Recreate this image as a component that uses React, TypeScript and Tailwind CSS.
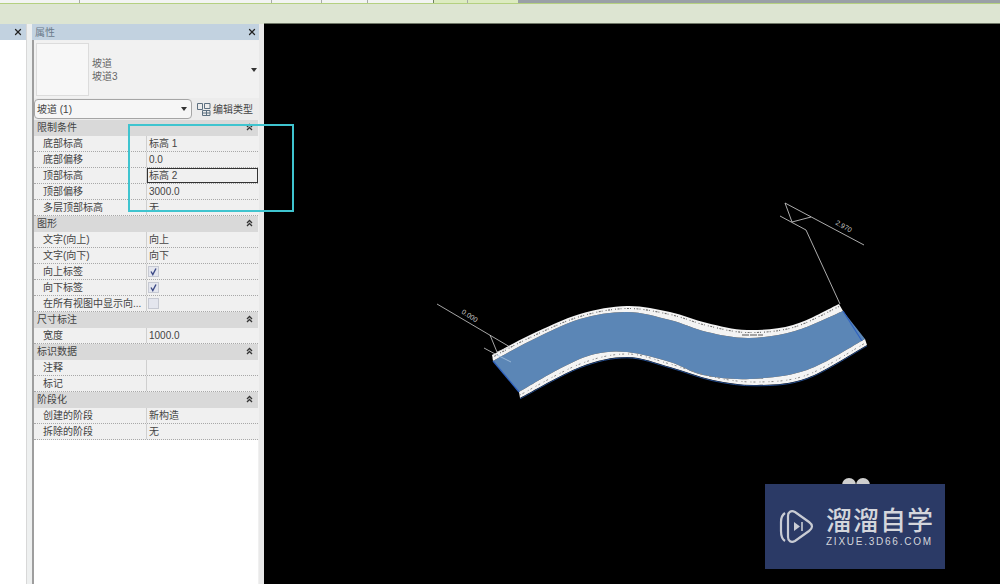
import React from "react";
import { X } from "lucide-react";

const cjk = { fontFamily: '"Liberation Sans", "Noto Sans CJK SC", sans-serif' };

type Row = { label: string; value?: string; check?: boolean | "off"; active?: boolean };
type Group = { title: string; rows: Row[] };

const groups: Group[] = [
  {
    title: "限制条件",
    rows: [
      { label: "底部标高", value: "标高 1" },
      { label: "底部偏移", value: "0.0" },
      { label: "顶部标高", value: "标高 2", active: true },
      { label: "顶部偏移", value: "3000.0" },
      { label: "多层顶部标高", value: "无" },
    ],
  },
  {
    title: "图形",
    rows: [
      { label: "文字(向上)", value: "向上" },
      { label: "文字(向下)", value: "向下" },
      { label: "向上标签", check: true },
      { label: "向下标签", check: true },
      { label: "在所有视图中显示向...", check: "off" },
    ],
  },
  { title: "尺寸标注", rows: [{ label: "宽度", value: "1000.0" }] },
  { title: "标识数据", rows: [{ label: "注释" }, { label: "标记" }] },
  {
    title: "阶段化",
    rows: [
      { label: "创建的阶段", value: "新构造" },
      { label: "拆除的阶段", value: "无" },
    ],
  },
];

// smooth line through the points, catmull-rom turned into beziers
function spline(pts: number[][]) {
  let d = `M${pts[0][0]} ${pts[0][1]}`;
  for (let i = 0; i < pts.length - 1; i++) {
    const p0 = pts[i - 1] || pts[i];
    const p1 = pts[i];
    const p2 = pts[i + 1];
    const p3 = pts[i + 2] || p2;
    const c1x = p1[0] + (p2[0] - p0[0]) / 6;
    const c1y = p1[1] + (p2[1] - p0[1]) / 6;
    const c2x = p2[0] - (p3[0] - p1[0]) / 6;
    const c2y = p2[1] - (p3[1] - p1[1]) / 6;
    d += ` C${c1x.toFixed(1)} ${c1y.toFixed(1)} ${c2x.toFixed(1)} ${c2y.toFixed(1)} ${p2[0]} ${p2[1]}`;
  }
  return d;
}

const topOuter = [[492, 355], [530, 335], [580, 314], [627, 306], [670, 312], [707, 323], [747, 330], [793, 325], [839, 304]];
const topInner = [[493, 361], [530, 341], [580, 319], [627, 312], [670, 320], [707, 332], [749, 338], [795, 331], [843, 311]];
const botInner = [[519, 392], [563, 367], [595, 354], [627, 352], [670, 362], [703, 375], [750, 379], [807, 370], [865, 339]];
const botOuter = [[520, 398], [580, 367], [627, 357], [670, 367], [713, 380], [757, 385], [807, 378], [867, 345]];

function band(a: number[][], b: number[][]) {
  const back = spline([...b].reverse()).replace("M", "L");
  return `${spline(a)} ${back} Z`;
}

function RampDrawing() {
  return (
    <svg viewBox="264 24 736 560" className="block h-full w-full" fill="none">
      <path d={band(topInner, botInner)} fill="#5b86b6" />
      <path d={band(topOuter, topInner)} fill="#f4f4f4" />
      <path d={band(botInner, botOuter)} fill="#f4f4f4" />
      <path d={spline(topOuter)} stroke="#6e6e6e" strokeWidth="1.1" strokeDasharray="1 1.5 2 1 1 3" transform="translate(0 2.5)" />
      <path d={spline(botOuter)} stroke="#8a8a8a" strokeWidth="1" strokeDasharray="1 2 2 4" transform="translate(0 -3)" />
      <path d={spline(botOuter)} stroke="#2f5fb0" strokeWidth="0.8" transform="translate(0 0.8)" />
      <path d="M742 335H763" stroke="#555" strokeWidth="1" strokeDasharray="7 1" />
      <path d="M493 361L519 392" stroke="#2f62c0" strokeWidth="1.2" />
      <path d="M843 311L862 341" stroke="#2f62c0" strokeWidth="1.2" />
      <path d="M437 304L510 347M484 348L497 355M490 335L497 352L510 347" stroke="#cfcfcf" strokeWidth="0.8" />
      <path d="M497 355L511 362" stroke="#a9c4e0" strokeWidth="0.8" />
      <path d="M785 203L864 245M780 216L806 230M785 203L792 222L811 217M806 230L840 304" stroke="#d8d8d8" strokeWidth="0.8" />
      <text x="0" y="0" fontSize="7" fill="#c8c8c8" transform="translate(461 313) rotate(33)" style={cjk}>0.000</text>
      <text x="0" y="0" fontSize="7" fill="#c8c8c8" transform="translate(835 224) rotate(30)" style={cjk}>2.970</text>
    </svg>
  );
}

function ChevronsUp() {
  return (
    <svg width="7" height="8" viewBox="0 0 7 8" fill="none" stroke="#333" strokeWidth="1.3">
      <path d="M1 4L3.5 1.5L6 4M1 7L3.5 4.5L6 7" />
    </svg>
  );
}

function Caret({ className }: { className?: string }) {
  return (
    <svg width="6" height="4" viewBox="0 0 6 4" className={className}>
      <path d="M0 0H6L3 4Z" fill="#333" />
    </svg>
  );
}

function CheckCell({ on }: { on: boolean }) {
  return (
    <div className="-ml-px flex h-[11px] w-[11px] items-center justify-center border border-[#c6c9d2] bg-[#e4e6ee]">
      {on && (
        <svg width="9" height="9" viewBox="0 0 9 9" fill="none" stroke="#3d4a86" strokeWidth="1.4">
          <path d="M2 4.5L3.8 7.5L7 1.5" />
        </svg>
      )}
    </div>
  );
}

function PropRow({ row }: { row: Row }) {
  return (
    <div className="flex h-4 border-b border-dotted border-[#a8a8a8] text-[10px] leading-[15px] text-[#444]">
      <div className="w-[113px] shrink-0 truncate border-r border-[#cfcfcf] pl-[9px]">{row.label}</div>
      <div className={"flex min-w-0 flex-1 items-center pl-[2px] " + (row.active ? "border border-[#333] pl-px" : "")}>
        {row.check !== undefined ? <CheckCell on={row.check === true} /> : row.value}
      </div>
    </div>
  );
}

function EditTypeIcon() {
  return (
    <svg width="14" height="14" viewBox="0 0 14 14" fill="none" stroke="#5d7080" strokeWidth="1">
      <path d="M0.5 1.5H5.5V7.5H0.5ZM7.5 1.5H13V6.5H7.5ZM5.5 8.5H13V13.5H5.5ZM9.5 8.5V13.5M5.5 11H13" />
    </svg>
  );
}

function Logo() {
  return (
    <div className="absolute left-[501px] top-[460px] flex h-[85px] w-[180px] items-center bg-[#2b3a66] pl-[14px]">
      <svg width="35" height="37" viewBox="0 0 35 37" fill="none" stroke="#c9ccd4" strokeWidth="2.2" className="shrink-0">
        <path d="M6 5C3 7 2 10 2 14V23C2 28 3 31 6 33" />
        <path d="M9 8C9 4 12 2 16 4L30 14C34 17 34 20 30 23L16 33C12 35 9 33 9 29Z" />
        <path d="M15 14L21 18.5L15 23Z" fill="#c9ccd4" stroke="none" />
        <path d="M23 14V23" strokeWidth="1.6" />
      </svg>
      <div className="ml-[12px] flex flex-col text-[#d4d6dc]">
        <div className="text-[26px] font-medium leading-[30px] tracking-[1px]" style={cjk}>溜溜自学</div>
        <div className="text-[10px] leading-[11px] tracking-[1.75px]" style={{ fontFamily: '"Liberation Sans", sans-serif' }}>ZIXUE.3D66.COM</div>
      </div>
    </div>
  );
}

export default function App() {
  return (
    <div className="relative flex h-[584px] w-[1000px] flex-col overflow-hidden bg-black" style={cjk}>
      {/* ribbon remains */}
      <div className="flex h-[3px] shrink-0">
        <div className="flex w-[518px] bg-[#f2f4f2]">
          <div className="w-[80px] border-r border-[#a8aaa8]" />
          <div className="w-[192px] border-r border-[#a8aaa8]" />
          <div className="w-[50px] border-r border-[#a8aaa8]" />
          <div className="w-[46px] border-r border-[#a8aaa8]" />
          <div className="w-[66px] border-r border-[#6f8060]" />
          <div className="w-[34px] border-r border-[#a8aaa8] bg-[#dcebc0]" />
          <div className="flex-1 bg-[#dcebc0]" />
        </div>
        <div className="flex-1 bg-[#9aa0a6]" />
      </div>
      <div className="h-[21px] shrink-0 border-t border-[#b4d080] bg-[#dde5d2]" />

      <div className="flex min-h-0 flex-1">
        {/* project browser edge */}
        <div className="flex w-[27px] shrink-0 flex-col border-r border-[#d8d8d8] bg-white">
          <div className="flex h-4 items-center justify-end bg-[#c2d2e0] pr-[3px] text-[#222]">
            <X size={10} strokeWidth={3} />
          </div>
        </div>
        <div className="w-[5px] shrink-0 bg-[#eef0f0]" />

        {/* properties */}
        <div className="flex w-[227px] shrink-0 flex-col bg-[#f0f0f0]">
          <div className="flex h-4 shrink-0 items-center justify-between bg-[#c2d2e0] pl-[3px] pr-[2px] text-[10px] text-[#6a7a8a]">
            <span>属性</span>
            <X size={10} strokeWidth={3} className="text-[#222]" />
          </div>
          <div className="flex min-h-0 flex-1 flex-col border-l-2 border-[#9e9e9e] pt-px">
            <div className="flex h-[57px] shrink-0 items-center bg-[#f1f1f1] pl-[2px] pr-[2px]">
              <div className="h-[53px] w-[53px] border border-[#dcdcdc] bg-[#f7f7f7]" />
              <div className="ml-[3px] flex-1 text-[10px] leading-[13px] text-[#666]">
                <div>坡道</div>
                <div>坡道3</div>
              </div>
              <Caret />
            </div>
            <div className="flex h-[22px] shrink-0 items-center bg-[#ececec] pr-[5px]">
              <div className="flex h-[20px] w-[158px] items-center justify-between rounded-sm border border-[#a5a5a5] bg-[#f6f6f6] pl-[2px] pr-[4px] text-[10px] text-[#444]">
                <span>坡道 (1)</span>
                <Caret />
              </div>
              <div className="ml-[5px] flex items-center gap-[2px] text-[10px] text-[#444]">
                <EditTypeIcon />
                <span>编辑类型</span>
              </div>
            </div>
            <div className="w-[224px] shrink-0">
              {groups.map((g) => (
                <div key={g.title}>
                  <div className="flex h-4 items-center justify-between bg-[#d9d9d9] pb-[2px] pl-[3px] pr-[5px] text-[10px] text-[#444]">
                    <span>{g.title}</span>
                    <ChevronsUp />
                  </div>
                  {g.rows.map((r) => (
                    <PropRow key={r.label} row={r} />
                  ))}
                </div>
              ))}
            </div>
            <div className="w-[224px] flex-1 bg-white" />
          </div>
        </div>
        <div className="w-[5px] shrink-0 bg-[#e9e9e9]" />

        {/* canvas */}
        <div className="relative -mt-px min-w-0 flex-1 border-t border-[#6f7767] bg-black">
          <RampDrawing />
          <div className="absolute left-[578px] top-[454px] flex">
            <div className="h-[8px] w-[14px] rounded-t-full bg-[#cfcfcf]" />
            <div className="h-[8px] w-[14px] rounded-t-full bg-[#cfcfcf]" />
          </div>
          <Logo />
        </div>
      </div>

      {/* cyan markup rectangle */}
      <div className="absolute left-[128px] top-[124px] h-[88px] w-[166px] border-2 border-[#3fc4cf]" />
    </div>
  );
}
